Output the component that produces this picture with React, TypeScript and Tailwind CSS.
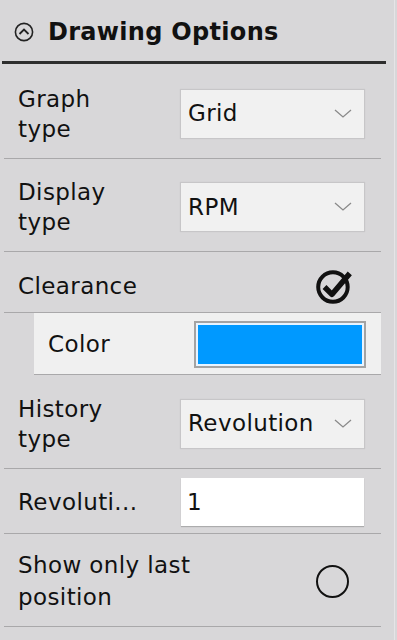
import { ReactNode } from 'react';

const font = { fontFamily: '"DejaVu Sans", Verdana, sans-serif' };

function Chevron() {
  return (
    <svg width="18" height="10" viewBox="0 0 18 10" className="shrink-0">
      <polyline points="1,1 9,8 17,1" fill="none" stroke="#8a8a8a" strokeWidth="1.3" />
    </svg>
  );
}

function Select({ value }: { value: string }) {
  return (
    <div className="flex h-[48px] w-[183px] items-center justify-between bg-[#f1f1f1] pl-[7px] pr-[12px] shadow-[0_0_1px_1px_rgba(0,0,0,0.08)]">
      <span>{value}</span>
      <Chevron />
    </div>
  );
}

function Row({ label, children, h, className = '' }: { label: ReactNode; children: ReactNode; h: string; className?: string }) {
  return (
    <div className={`flex items-center border-b border-[#a9a8aa] pl-[14px] ${h} ${className}`}>
      <div className="w-[163px] shrink-0 whitespace-nowrap leading-[30px]">{label}</div>
      {children}
    </div>
  );
}

export default function App() {
  return (
    <div className="h-[640px] w-[397px] overflow-hidden bg-[#d8d7d9] text-[23px] tracking-[0.4px] text-[#111]" style={font}>
      <div className="w-[395px] border-r border-[#e6e5e7] h-full">
        {/* header */}
        <div className="flex h-[61px] items-center gap-[14px] pl-[14px] pt-[2px]">
          <svg width="20" height="20" viewBox="0 0 20 20">
            <circle cx="10" cy="10" r="8.6" fill="none" stroke="#222" strokeWidth="1.6" />
            <polyline points="5.5,12 10,7.5 14.5,12" fill="none" stroke="#222" strokeWidth="1.8" />
          </svg>
          <span className="font-bold text-[24px] tracking-[0.3px]">Drawing Options</span>
        </div>
        <div className="ml-[2px] h-[3px] w-[384px] bg-[#2e2e2e]" />

        <div className="ml-[4px] w-[377px]">
          <Row h="h-[95px]" className="pt-[5px]" label={<>Graph<br />type</>}>
            <Select value="Grid" />
          </Row>
          <Row h="h-[93px]" className="pt-[4px]" label={<>Display<br />type</>}>
            <Select value="RPM" />
          </Row>
          <Row h="h-[61px]" className="pt-[8px]" label="Clearance">
            <div className="flex w-[183px] justify-end pr-[10px]">
              <svg width="40" height="38" viewBox="0 0 38 36">
                <circle cx="18" cy="19" r="14" fill="none" stroke="#111" strokeWidth="3.8" />
                <polyline points="10,19 17,26 34,6" fill="none" stroke="#111" strokeWidth="5.2" strokeLinejoin="round" />
              </svg>
            </div>
          </Row>
          <div className="ml-[30px] flex h-[62px] items-center border-b border-[#a9a8aa] bg-[#f0f0f0] pl-[14px] pt-[2px]">
            <div className="w-[146px]">Color</div>
            <div className="h-[47px] w-[172px] border-2 border-[#a3a3a3] bg-[#e8f4ff] p-[2px]">
              <div className="h-full w-full bg-[#0099ff]" />
            </div>
          </div>
          <Row h="h-[94px]" className="pt-[4px]" label={<>History<br />type</>}>
            <Select value="Revolution" />
          </Row>
          <Row h="h-[65px]" className="pt-[2px]" label="Revoluti...">
            <div className="flex h-[48px] w-[183px] items-center bg-white pl-[6px] shadow-[0_1px_1px_rgba(0,0,0,0.2)]">
              1
            </div>
          </Row>
          <Row h="h-[93px]" className="pt-[2px]" label={<span className="block leading-[32px]">Show only last<br />position</span>}>
            <div className="flex w-[183px] justify-end pr-[14px]">
              <svg width="35" height="35" viewBox="0 0 35 35">
                <circle cx="17.5" cy="17.5" r="15.5" fill="none" stroke="#111" strokeWidth="2" />
              </svg>
            </div>
          </Row>
        </div>
      </div>
    </div>
  );
}
